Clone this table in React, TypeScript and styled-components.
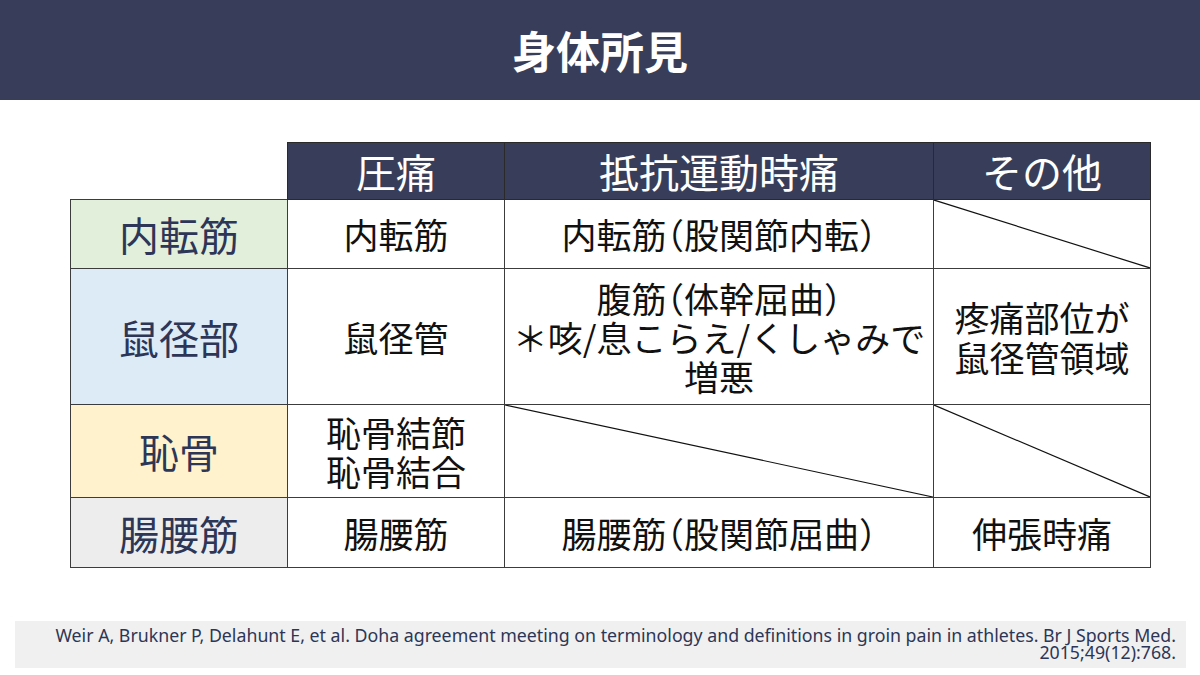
import React from "react";
import styled, { createGlobalStyle } from "styled-components";

const Global = createGlobalStyle`
  html, body { margin: 0; padding: 0; background: #ffffff; }
  body { width: 1200px; height: 675px; overflow: hidden; font-family: "Noto Sans CJK JP", "Noto Sans", sans-serif; }
`;

const Page = styled.div`
  width: 1200px;
  height: 675px;
  display: flex;
  flex-direction: column;
  background: #ffffff;
`;

const TitleBar = styled.header`
  height: 100px;
  background: #383e59;
  display: flex;
  align-items: center;
  justify-content: center;
`;

const Title = styled.h1`
  margin: 0;
  color: #ffffff;
  font-family: "Noto Sans CJK JP", sans-serif;
  font-weight: 700;
  font-size: 44px;
  line-height: 1;
`;

const Body = styled.main`
  padding: 42px 50px 0 70px;
`;

const Table = styled.table`
  border-collapse: collapse;
  table-layout: fixed;
  width: 1080px;
  font-family: "Noto Sans CJK JP", sans-serif;
`;

const HeadRow = styled.tr`
  height: 57px;
`;

const Corner = styled.th`
  border: none;
  background: transparent;
`;

const HeadCell = styled.th`
  border: 1px solid #2a2a2a;
  background: #383e59;
  color: #ffffff;
  font-weight: 400;
  font-size: 40px;
  line-height: 1;
  text-align: center;
  vertical-align: middle;
  padding: 0;
`;

const Row = styled.tr<{ $h: number }>`
  height: ${(p) => p.$h}px;
`;

const LabelCell = styled.th<{ $bg: string }>`
  border: 1px solid #3c3c3c;
  background: ${(p) => p.$bg};
  color: #2d3656;
  font-weight: 400;
  font-size: 40px;
  line-height: 1.1;
  text-align: center;
  vertical-align: middle;
  padding: 0;
`;

const Cell = styled.td`
  position: relative;
  border: 1px solid #3c3c3c;
  background: #ffffff;
  color: #111111;
  font-size: 35px;
  line-height: 1.12;
  text-align: center;
  vertical-align: middle;
  padding: 0;
`;

const Line = styled.div`
  white-space: nowrap;
`;

const Paren = styled.span`
  font-feature-settings: "halt" 1;
`;

const Diagonal = styled.svg`
  position: absolute;
  inset: 0;
  width: 100%;
  height: 100%;
  display: block;
`;

const Footer = styled.footer`
  margin: 53px 14px 0 15px;
  height: 47px;
  box-sizing: border-box;
  background: #f0f0f0;
  padding: 6px 10px 0 0;
  text-align: right;
  color: #2d3656;
  font-family: "Noto Sans", "Open Sans", sans-serif;
  font-size: 17.75px;
  line-height: 16.5px;
`;

const FooterLine = styled.div`
  white-space: nowrap;
`;

const Slash = () => (
  <Diagonal viewBox="0 0 100 100" preserveAspectRatio="none">
    <line x1="0" y1="0" x2="100" y2="100" stroke="#111" strokeWidth="1.2" vectorEffect="non-scaling-stroke" />
  </Diagonal>
);

const renderLine = (text: string) =>
  text.split(/([（）])/).map((part, k) =>
    part === "（" || part === "）" ? <Paren key={k}>{part}</Paren> : <React.Fragment key={k}>{part}</React.Fragment>
  );

const rows = [
  { label: "内転筋", bg: "#e2efda", h: 69, cells: [["内転筋"], ["内転筋（股関節内転）"], null] },
  { label: "鼠径部", bg: "#ddebf7", h: 136, cells: [["鼠径管"], ["腹筋（体幹屈曲）", "＊咳/息こらえ/くしゃみで", "増悪"], ["疼痛部位が", "鼠径管領域"]] },
  { label: "恥骨", bg: "#fff2cc", h: 93, cells: [["恥骨結節", "恥骨結合"], null, null] },
  { label: "腸腰筋", bg: "#ededed", h: 70, cells: [["腸腰筋"], ["腸腰筋（股関節屈曲）"], ["伸張時痛"]] },
];

export default function App() {
  return (
    <Page>
      <Global />
      <TitleBar>
        <Title>身体所見</Title>
      </TitleBar>
      <Body>
        <Table>
          <colgroup>
            <col style={{ width: 217 }} />
            <col style={{ width: 217 }} />
            <col style={{ width: 429 }} />
            <col style={{ width: 217 }} />
          </colgroup>
          <thead>
            <HeadRow>
              <Corner />
              <HeadCell>圧痛</HeadCell>
              <HeadCell>抵抗運動時痛</HeadCell>
              <HeadCell>その他</HeadCell>
            </HeadRow>
          </thead>
          <tbody>
            {rows.map((r) => (
              <Row key={r.label} $h={r.h}>
                <LabelCell $bg={r.bg}>{r.label}</LabelCell>
                {r.cells.map((c, i) => (
                  <Cell key={i}>
                    {c ? c.map((line, j) => <Line key={j}>{renderLine(line)}</Line>) : <Slash />}
                  </Cell>
                ))}
              </Row>
            ))}
          </tbody>
        </Table>
      </Body>
      <Footer>
        <FooterLine>
          Weir A, Brukner P, Delahunt E, et al. Doha agreement meeting on terminology and definitions in groin pain in athletes. Br J Sports Med.
        </FooterLine>
        <FooterLine>2015;49(12):768.</FooterLine>
      </Footer>
    </Page>
  );
}
